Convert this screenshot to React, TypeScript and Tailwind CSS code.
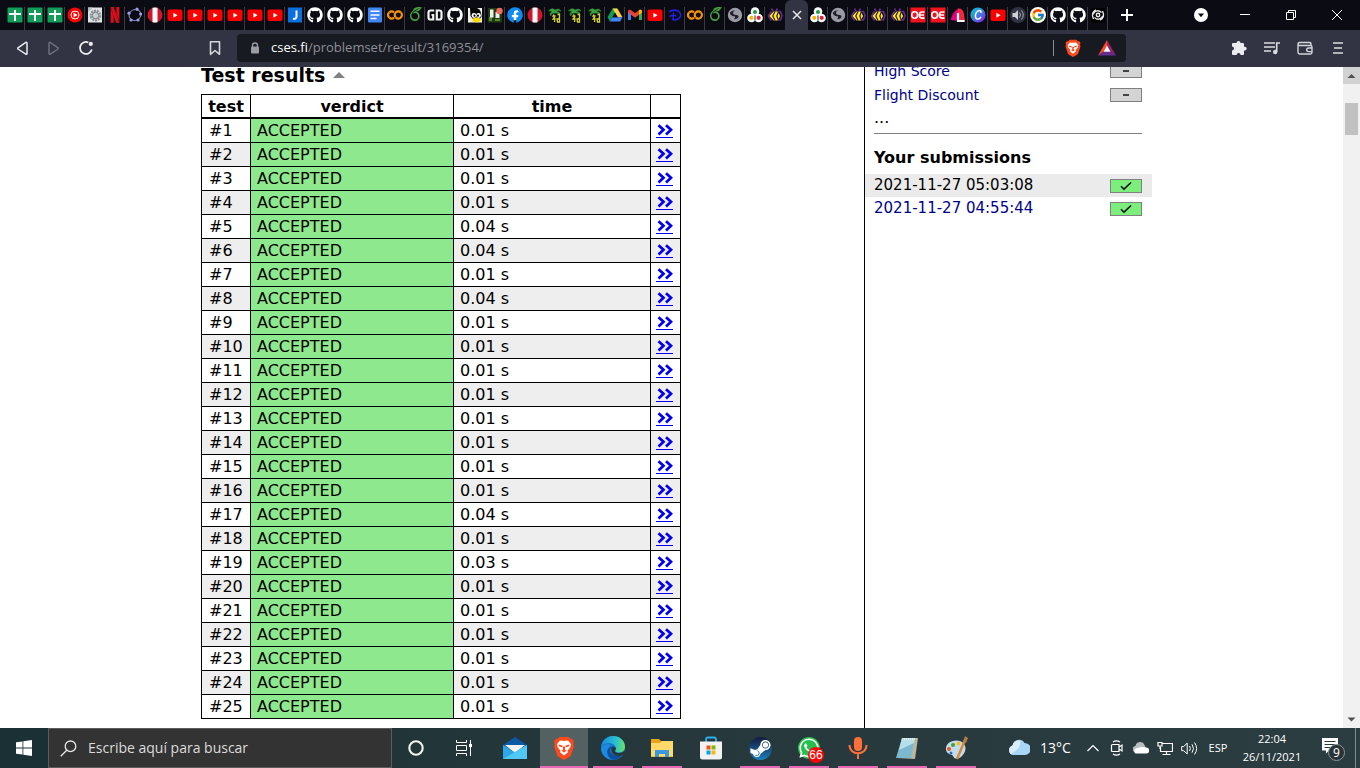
import type { ReactNode } from "react";
import { FaFacebook, FaGithub, FaSteamSymbol, FaWhatsapp } from "react-icons/fa";
import { FcGoogle } from "react-icons/fc";
import { SiGooglecolab, SiNetflix, SiOverleaf } from "react-icons/si";

/* ---------- tab icons (16x16) ---------- */

const Svg = ({ children, size = 16, box = "0 0 16 16" }: { children: ReactNode; size?: number; box?: string }) => (
  <svg width={size} height={size} viewBox={box} fill="none" aria-hidden="true" className="shrink-0">
    {children}
  </svg>
);

const Sheet = () => (
  <Svg>
    <rect x="0.5" y="0.5" width="15" height="15" rx="1" fill="#0f9d58" />
    <path d="M7 3h2v3h5v2H9v6H7V8H2V6h5z" fill="#fff" />
  </Svg>
);
const YtMusic = () => (
  <Svg>
    <circle cx="8" cy="8" r="7.5" fill="#f00" />
    <circle cx="8" cy="8" r="4" stroke="#fff" />
    <path d="M6.6 5.6 10.6 8l-4 2.4z" fill="#fff" />
  </Svg>
);
const Gear = () => (
  <Svg>
    <rect x="1" y="0.5" width="14" height="15" fill="#dfe3e3" />
    <circle cx="8.5" cy="8.5" r="4.6" stroke="#8a9194" strokeWidth="2.6" strokeDasharray="2 .8" />
    <circle cx="8.5" cy="8.5" r="3.2" fill="#c9cecf" stroke="#788084" />
    <path d="M1 .5h5L1 5z" fill="#b9bec0" />
  </Svg>
);
const Orbit = () => (
  <Svg>
    <ellipse cx="8" cy="8" rx="6" ry="5.4" stroke="#8d8d95" transform="rotate(-25 8 8)" />
    {[[10, 2.2], [13.6, 7], [11, 13], [4, 13], [2, 6.2]].map(([x, y]) => (
      <circle key={x} cx={x} cy={y} r="1.6" fill="#9999ff" />
    ))}
  </Svg>
);
const Peru = () => (
  <Svg>
    <circle cx="8" cy="8" r="7.5" fill="#d4142a" />
    <path d="M5.5.8a8 8 0 0 1 5 0v14.4a8 8 0 0 1-5 0z" fill="#fff" />
  </Svg>
);
const YouTube = () => (
  <Svg>
    <rect x="0.5" y="2.5" width="15" height="11.5" rx="2" fill="#f00" />
    <path d="M6.4 5.7 10.6 8.200l-4.2 2.500z" fill="#fff" />
  </Svg>
);
const Jay = () => (
  <Svg>
    <rect x="1" y="0.5" width="14" height="15" fill="#0b6fde" />
    <path d="M9.5 3.5v6c0 2-1.2 2.6-3.6 2.3" stroke="#fff" strokeWidth="2" />
  </Svg>
);
const Docs = () => (
  <Svg>
    <rect x="1" y="0.5" width="14" height="15" rx="1" fill="#4285f4" />
    <path d="M3.5 4.2h9M3.5 8h9M3.5 11.5h6" stroke="#fff" strokeWidth="1.6" />
  </Svg>
);
const GameDev = () => (
  <Svg>
    <path d="M7.200 3.500H3.600Q1.500 3.500 1.500 5.500v5q0 2 2.100 2H6.200V8H4.500M9.800 3.500H12.500q2 0 2 2v5q0 2-2 2H9.800z" stroke="#f2f2f2" strokeWidth="2.200" />
  </Svg>
);
const Penguin = () => (
  <Svg>
    <rect x="1" y="1" width="14" height="14.500" fill="#f1f1ea" />
    <path d="M3 1h7c3 1 4.500 4 4.500 9l-2 2H6L3.500 9z" fill="#050505" />
    <circle cx="7" cy="8.500" r="2.400" fill="#fff" />
    <circle cx="11.500" cy="8.500" r="2.400" fill="#fff" />
    <circle cx="7.500" cy="8.700" r="1.100" fill="#000" />
    <circle cx="11" cy="8.700" r="1.100" fill="#000" />
    <path d="M6 11.500q3.500-2 7 0l1.500 2-4 2-5-1z" fill="#fd0" />
  </Svg>
);
const Garden = () => (
  <Svg>
    <rect x="1" y="1" width="14" height="14.500" fill="#1e3c12" />
    <path d="M2 10h3v4H2zM8 12h5v2H8z" fill="#568a2c" />
    <path d="M3 2.500h3.500v8H3zM8.500 5h4v6h-4z" fill="#eee" />
    <circle cx="12.500" cy="4" r="3.200" fill="#f46a5a" />
  </Svg>
);
const Palm = () => (
  <Svg>
    <path d="M1.500 4Q5 0 8 3q4-2.500 6 1-3-1-5 .5 4 0 4 3-2-2-5-1.500Q4.500 5.500 3.500 9 2 6.500 5 4.500 3 3.500 1.500 4z" fill="#3ca33c" stroke="#2d8a38" strokeWidth=".6" />
    <path d="M7 7.500 6 9h2.500M8 9.500l-2 2.500h2l-.5 3M10.500 7.500h2v3l-1 1.500M10 12h2.500v3h-2z" stroke="#d6d336" strokeWidth="1.300" />
  </Svg>
);
const Drive = () => (
  <Svg>
    <path d="M5.600 1.500h4.800L8 5.700 2.900 14.500.500 10.300z" fill="#0f9d58" />
    <path d="M5.600 1.500h4.800l5.100 8.800h-4.800z" fill="#ffcd40" />
    <path d="M5.300 10.300h10.200l-2.400 4.200H2.900z" fill="#4285f4" />
    <path d="M8 5.700l2.700 4.600H5.300z" fill="#101018" />
  </Svg>
);
const Gmail = () => (
  <Svg>
    <path d="M1 4.500 4 6.700V13H1.600A.6.600 0 0 1 1 12.400z" fill="#4285f4" />
    <path d="M15 4.500 12 6.700V13h2.400a.6.600 0 0 0 .6-.6z" fill="#34a853" />
    <path d="M1 4.300C1 2.800 2.700 2.200 3.800 3L8 6.200 12.200 3c1.100-.8 2.800-.2 2.800 1.300v1.200L8 10.700 1 5.500z" fill="#ea4335" />
    <path d="M12 3.200c1.300-1 3-.3 3 1.100v1.200l-3 2.200z" fill="#fbbc04" />
  </Svg>
);
const Disney = () => (
  <Svg>
    <path d="M2 5Q6 1.500 12 4.500q4 4-1 7.500-3 1.500-6 .5M6.500 5.500l-.5 8M2.500 9.500q4-2 6.500-.5" stroke="#2020e8" strokeWidth="1.500" />
  </Svg>
);
const Globe = () => (
  <Svg>
    <circle cx="8" cy="8" r="7.200" fill="#9a9ba5" />
    <path d="M3 5.500q2-2.500 5-2-2.500 1-2 3Q7 8 10 8q2.500 1 1 3-1.500 1.500-4 1 1.500-1 1-2.500Q5 9.500 3 7z" fill="#20212c" />
  </Svg>
);
const Judge = () => (
  <Svg>
    <circle cx="8" cy="4.500" r="4.300" fill="#fff" />
    <circle cx="4.500" cy="11" r="4.300" fill="#fff" />
    <circle cx="11.500" cy="11" r="4.300" fill="#fff" />
    <circle cx="8" cy="5" r="2.100" fill="#23a046" />
    <circle cx="4.300" cy="10.800" r="2.100" fill="#f8b500" />
    <circle cx="11.700" cy="10.800" r="2.100" fill="#e4232e" />
    <path d="M8 8.500v5" stroke="#333" />
  </Svg>
);
const Bee = () => (
  <Svg>
    <path d="M6 4 4.500 1.500M9 4l1.500-2.500M11 4.500h2.500l1.500 4-1.500 4.500H11M4.500 4.500 1.500 9 4.500 13.500" stroke="#6b2b91" strokeWidth="1.600" />
    <path d="M6.500 4.500H11L13 9l-2 4.500H6.500L2.500 9z" fill="#ffe922" />
    <path d="M8 4.500 5.800 9 8 13.500M11.500 4.500 9.800 9l1.700 4.500" stroke="#29152e" strokeWidth="1.200" />
  </Svg>
);
const RedOe = () => (
  <Svg>
    <rect x="0.500" y="0.500" width="15" height="15" fill="#f5121f" />
    <ellipse cx="4.700" cy="8" rx="2.900" ry="3.200" stroke="#fff" strokeWidth="1.600" />
    <path d="M14.500 5H12Q9.300 5 9.300 8t2.700 3.100h2.500M9 8h5" stroke="#fff" strokeWidth="1.600" />
  </Svg>
);
const Ell = () => (
  <Svg>
    <path d="M8 1.500 12 4v10.500L.800 13Q2 6 8 1.500z" fill="#e6007e" />
    <path d="M8 1.500Q13 1 14 7l1 7.500H8z" fill="#f0283c" />
    <path d="M8 6v8h6.500" stroke="#fff" strokeWidth="2.200" />
  </Svg>
);
const Canva = () => (
  <Svg>
    <defs>
      <linearGradient id="canva" x1="2" y1="2" x2="13" y2="14" gradientUnits="userSpaceOnUse">
        <stop stopColor="#05c3cf" />
        <stop offset=".5" stopColor="#3e82e4" />
        <stop offset="1" stopColor="#7a2ee8" />
      </linearGradient>
    </defs>
    <circle cx="8" cy="8" r="7.600" fill="url(#canva)" />
    <path d="M10.800 6q.8-2.700-1.500-2.500C6.500 4 4.900 7.500 5.500 10c.6 3.200 3.800 2.500 5.500-.2" stroke="#fff" strokeWidth="1.500" />
  </Svg>
);
const Audio = () => (
  <Svg>
    <circle cx="8" cy="8" r="8" fill="#303342" />
    <path d="M2.500 6H5l3-3v10l-3-3H2.500z" fill="#d0d1d8" />
    <path d="M9.500 5.500q2 2.500 0 5M11.500 3.500q3.500 4.500 0 9" stroke="#a8a9b4" />
  </Svg>
);
const Spiral = () => (
  <Svg>
    <rect x="1" y="1" width="14" height="14.500" fill="#000" />
    <circle cx="8" cy="8" r="1.700" stroke="#eee" strokeWidth="1.400" />
    <path d="M3.500 12Q.5 5.500 6 3M12.500 4q3 6.500-2.500 9M4.500 10.500Q9 14.500 13 9M11.500 5.500Q7 1.500 3 7" stroke="#e5e5e5" strokeWidth="1.400" />
  </Svg>
);
const Octo = () => <FaGithub size={16} color="#fff" />;
const Colab = () => <SiGooglecolab size={16} color="#f9930b" />;
const Leaf = () => <SiOverleaf size={14} color="#47a141" />;
const Netflix = () => <SiNetflix size={16} color="#d80f1a" />;
const Face = () => (
  <span className="grid size-4 place-items-center rounded-full bg-[radial-gradient(circle,white_45%,transparent_50%)]">
    <FaFacebook size={16} color="#0e8cf1" />
  </span>
);
const Google = () => (
  <span className="grid size-4 place-items-center rounded-full bg-white">
    <FcGoogle size={14} />
  </span>
);

type Tab = [string, () => ReactNode];
const leftTabs: Tab[] = [
  ["Sheets", Sheet], ["Sheets", Sheet], ["Sheets", Sheet], ["YouTube Music", YtMusic], ["Settings", Gear],
  ["Netflix", Netflix], ["Orbit", Orbit], ["Peru", Peru], ["YouTube", YouTube], ["YouTube", YouTube],
  ["YouTube", YouTube], ["YouTube", YouTube], ["YouTube", YouTube], ["YouTube", YouTube], ["J", Jay],
  ["GitHub", Octo], ["GitHub", Octo], ["GitHub", Octo], ["Docs", Docs], ["Colab", Colab], ["Overleaf", Leaf],
  ["GD", GameDev], ["GitHub", Octo], ["Penguin", Penguin], ["Garden", Garden], ["Facebook", Face], ["Peru", Peru],
  ["Palm", Palm], ["Palm", Palm], ["Palm", Palm], ["Drive", Drive], ["Gmail", Gmail], ["YouTube", YouTube],
  ["Disney", Disney], ["Colab", Colab], ["Overleaf", Leaf], ["Web page", Globe], ["Judge", Judge], ["Bee", Bee],
];
const rightTabs: Tab[] = [
  ["Judge", Judge], ["Web page", Globe], ["Bee", Bee], ["Bee", Bee], ["Bee", Bee], ["OE", RedOe], ["OE", RedOe],
  ["L", Ell], ["Canva", Canva], ["YouTube", YouTube], ["Audio", Audio], ["Google", Google], ["GitHub", Octo],
  ["GitHub", Octo], ["Spiral", Spiral],
];

const TabButton = ({ tab: [label, Icon], line }: { tab: Tab; line: boolean }) => (
  <button
    aria-label={label}
    className={
      line
        ? "flex h-[23px] w-5 shrink-0 items-start justify-end pr-px self-end border-r border-[#3b3c42]"
        : "flex h-[23px] w-5 shrink-0 items-start justify-center self-end"
    }
  >
    <Icon />
  </button>
);

const BraveLion = ({ size }: { size: number }) => (
  <Svg size={size} box="0 0 24 24">
    <path d="M7.500 1h9l2 2 1.500-.3 2 2.600-.7 2 .7 2.700-3 9-1.500 2L12 24l-5.500-3L5 19 2 10l.7-2.700-.7-2 2-2.600L5.500 3z" fill="#fb4a1c" />
    <path d="M9 4.500l3 .6 3-.6 1.500.5L19 8.300l-.5 2.700-3 3.700.5 1.500-4 3.300-4-3.300.5-1.500-3-3.700L5 8.300 7.500 5z" fill="#fff" />
    <path d="M6.500 8.500l4 1-.3 1.700-3-.7zM17.500 8.500l-4 1 .3 1.700 3-.7zM10.700 10.500h2.600l-.5 3 1.700 1.300L12 16.500l-2.500-1.700 1.700-1.300z" fill="#fb4a1c" />
  </Svg>
);

function TabStrip() {
  return (
    <div className="flex h-[30px] shrink-0 bg-[#0b0b14]">
      <div className="flex min-w-0 pl-[5px]">
        {leftTabs.map((tab, i) => (
          <TabButton key={i} tab={tab} line={i < leftTabs.length - 1} />
        ))}
        <button aria-label="Close tab" className="grid w-[23px] shrink-0 place-items-center rounded-t-md bg-[#323443]">
          <Svg size={10} box="0 0 10 10">
            <path d="M1 1l8 8M9 1L1 9" stroke="#e8e8ec" strokeWidth="1.500" />
          </Svg>
        </button>
        {rightTabs.map((tab, i) => (
          <TabButton key={i} tab={tab} line />
        ))}
      </div>
      <button aria-label="New tab" className="grid w-[38px] place-items-center">
        <Svg size={12} box="0 0 12 12">
          <path d="M6 0v12M0 6h12" stroke="#fff" strokeWidth="2" />
        </Svg>
      </button>
      <div className="ml-auto flex">
        <button aria-label="Search tabs" className="grid w-[42px] place-items-center">
          <Svg size={14} box="0 0 14 14">
            <circle cx="7" cy="7" r="7" fill="#fff" />
            <path d="M4 5.500h6L7 9.300z" fill="#0b0b14" />
          </Svg>
        </button>
        <button aria-label="Minimize" className="grid w-[46px] place-items-center">
          <Svg size={10} box="0 0 10 10">
            <path d="M0 4.500h10" stroke="#fff" />
          </Svg>
        </button>
        <button aria-label="Restore" className="grid w-[46px] place-items-center">
          <Svg size={10} box="0 0 10 10">
            <path d="M.5 2.500h7v7h-7zM2.500 2.500v-2h7v7h-2" stroke="#fff" />
          </Svg>
        </button>
        <button aria-label="Close" className="grid w-[46px] place-items-center">
          <Svg size={10} box="0 0 10 10">
            <path d="M0 0l10 10M10 0L0 10" stroke="#fff" />
          </Svg>
        </button>
      </div>
    </div>
  );
}

function Toolbar() {
  return (
    <div className="flex h-[37px] shrink-0 bg-[#323443] pt-1 pb-[5px] pr-1.5 pl-1.5">
      <button aria-label="Back" className="grid w-8 place-items-center">
        <Svg>
          <path d="M13 3v10.600a.8.800 0 0 1-1.200.6L4 9a.8.800 0 0 1 0-1.200l7.800-5.400A.8.800 0 0 1 13 3z" stroke="#ececf0" strokeWidth="1.500" />
        </Svg>
      </button>
      <button aria-label="Forward" className="grid w-8 place-items-center">
        <Svg>
          <path d="M3 3v10.600a.8.800 0 0 0 1.200.6L12 9a.8.800 0 0 0 0-1.200L4.200 2.400A.8.800 0 0 0 3 3z" stroke="#6d6e7a" strokeWidth="1.500" />
        </Svg>
      </button>
      <button aria-label="Reload" className="grid w-8 place-items-center">
        <Svg>
          <path d="M13.800 9.500A6 6 0 1 1 10.300 2.400" stroke="#ececf0" strokeWidth="1.800" />
          <circle cx="12.800" cy="3.900" r="2.100" fill="#ececf0" />
        </Svg>
      </button>
      <button aria-label="Bookmark" className="ml-[97px] grid w-8 place-items-center">
        <Svg>
          <path d="M3.500 1.700h9v12.600L8 10.500l-4.500 3.800z" stroke="#d4d5da" strokeWidth="1.600" strokeLinejoin="round" />
        </Svg>
      </button>
      <div className="mr-24 ml-1.5 flex h-7 min-w-0 flex-1 items-center rounded bg-[#181a22] pr-2.5 pl-3">
        <Svg size={12} box="0 0 12 12">
          <path d="M3.500 5V3.500a2.500 2.500 0 0 1 5 0V5" stroke="#9b9ca4" strokeWidth="1.300" />
          <rect x="2" y="4.500" width="8" height="7" rx="1" fill="#9b9ca4" />
        </Svg>
        <a href="#result" className="ml-2.5 flex-1 truncate text-[13px] text-[#8d8f96]">
          <span className="text-white">cses.fi</span>/problemset/result/3169354/
        </a>
        <span className="mr-2.5 h-4 w-px bg-[#8b8c94]" />
        <button aria-label="Brave Shields" className="mr-4">
          <BraveLion size={18} />
        </button>
        <button aria-label="Rewards">
          <Svg size={18} box="0 0 18 16">
            <path d="M9 0v6L5.800 11.500 0 15.500z" fill="#ff4724" />
            <path d="M9 0l9 15.500-5.800-4L9 6z" fill="#9e1f63" />
            <path d="M0 15.500l5.800-4h6.400l5.800 4z" fill="#662d91" />
            <path d="M9 5.500l3.500 6.300h-7z" fill="#fff" />
          </Svg>
        </button>
      </div>
      <button aria-label="Extensions" className="grid w-[33px] place-items-center">
        <Svg>
          <path d="M5.500 3a2 2 0 0 1 4 0H12q1 0 1 1v2.700h.8a1.900 1.900 0 0 1 0 3.800H13v3.500q0 1-1 1H9.600a2 2 0 0 0-4 0H2q-1 0-1-1v-3.500a2 2 0 0 0 0-4V4q0-1 1-1z" fill="#ececf0" />
        </Svg>
      </button>
      <button aria-label="Playlist" className="grid w-[33px] place-items-center">
        <Svg>
          <path d="M0 3h11M0 7h11M0 11h7M12.700 12V3H16" stroke="#dcdce2" strokeWidth="1.600" />
          <circle cx="11.200" cy="12" r="2.200" fill="#dcdce2" />
        </Svg>
      </button>
      <button aria-label="Wallet" className="grid w-[33px] place-items-center">
        <Svg>
          <path d="M14 5.500V4.200A1.200 1.200 0 0 0 12.800 3M1 4v8.300q0 1.700 1.700 1.700h10.600q1.700 0 1.700-1.700V7q0-1.500-1.700-1.500H2.600Q1 5.500 1 4q0-1.500 1.600-1.500h10.200q1.200 0 1.200 1.400M15 8h-3.500a1.800 1.800 0 0 0 0 3.600H15" stroke="#d4d5da" strokeWidth="1.400" />
        </Svg>
      </button>
      <button aria-label="Menu" className="grid w-[33px] place-items-center">
        <Svg>
          <path d="M3 3h10M4 8h8M3 13h10" stroke="#dcdce2" strokeWidth="1.600" />
        </Svg>
      </button>
    </div>
  );
}

/* ---------- page ---------- */

const times: Record<number, string> = { 5: "0.04 s", 6: "0.04 s", 8: "0.04 s", 17: "0.04 s", 19: "0.03 s" };
const tests = Array.from({ length: 25 }, (_, i) => ({ id: i + 1, time: times[i + 1] ?? "0.01 s" }));

function Results() {
  return (
    <main className="min-w-0 flex-1 pl-2.5">
      <h1 className="flex h-[27px] items-start gap-2 text-[19px] leading-4 font-bold">
        Test results
        <button aria-label="Collapse results" className="flex h-4 items-center">
          <svg width="12" height="6" viewBox="0 0 12 6" aria-hidden="true">
            <path d="M6 0l6 6H0z" fill="#808080" />
          </svg>
        </button>
      </h1>
      <table className="w-[480px] max-w-full table-fixed border-collapse border border-black leading-5">
        <colgroup>
          <col className="w-[49px]" />
          <col className="w-[203px]" />
          <col />
          <col className="w-[30px]" />
        </colgroup>
        <thead>
          <tr className="h-[23px] border-b-2 border-black">
            <th className="border-r border-black p-0 pt-0.5">test</th>
            <th className="border-r border-black p-0 pt-0.5">verdict</th>
            <th className="border-r border-black p-0 pt-0.5">time</th>
            <th className="p-0" />
          </tr>
        </thead>
        <tbody>
          {tests.map(({ id, time }) => (
            <tr key={id} className="h-6 border-b border-black even:bg-[#eeeeee]">
              <td className="border-r border-black p-0 pt-0.5 pl-[7px]">#{id}</td>
              <td className="border-r border-black bg-[#8ee88e] p-0 pt-0.5 pl-1.5">ACCEPTED</td>
              <td className="border-r border-black p-0 pt-0.5 pl-1.5">{time}</td>
              <td className="p-0 pt-0.5 pl-[5px]">
                <a href={`#test${id}`} aria-label={`Details of test ${id}`} className="flex h-3.5 w-[17px] justify-center border-b border-[#0000ee]">
                  <svg width="16" height="12" viewBox="0 0 16 12" fill="none" aria-hidden="true">
                    <path d="M1.500 1.200l5 4.600-5 4.600M9 1.200l5 4.600-5 4.600" stroke="#0000ee" strokeWidth="2.700" />
                  </svg>
                </a>
              </td>
            </tr>
          ))}
        </tbody>
      </table>
    </main>
  );
}

const Badge = ({ ok }: { ok?: boolean }) => (
  <span className={ok ? "grid h-3.5 w-8 place-items-center border border-[#808080] bg-[#7bee7b]" : "grid h-3.5 w-8 place-items-center border border-[#808080] bg-[#d4d4d4]"}>
    <svg width="12" height="10" viewBox="0 0 12 10" fill="none" aria-hidden="true">
      {ok ? <path d="M1 5.200l3 3L11 1.500" stroke="#111" strokeWidth="1.600" /> : <path d="M3 5h6" stroke="#444" strokeWidth="2" />}
    </svg>
  </span>
);

function Sidebar() {
  return (
    <aside className="-mt-2 w-72 shrink-0 border-l border-black text-sm">
      <ul className="pr-2.5 pl-[9px] text-[#00008b]">
        <li className="flex h-6 items-center justify-between">
          <a href="#high-score">High Score</a>
          <Badge />
        </li>
        <li className="flex h-[23px] items-center justify-between">
          <a href="#flight-discount">Flight Discount</a>
          <Badge />
        </li>
        <li className="h-[27px] text-base leading-6 text-black">...</li>
      </ul>
      <hr className="mr-2.5 ml-[9px] border-[#808080]" />
      <h2 className="px-[9px] pt-3 pb-1 text-base font-bold">Your submissions</h2>
      <ul className="text-[15px]">
        <li className="flex h-[23px] items-center justify-between bg-[#ebebeb] pr-2.5 pl-[9px]">
          2021-11-27 05:03:08
          <Badge ok />
        </li>
        <li className="flex h-[23px] items-center justify-between pr-2.5 pl-[9px]">
          <a href="#earlier" className="text-[#00008b]">2021-11-27 04:55:44</a>
          <Badge ok />
        </li>
      </ul>
    </aside>
  );
}

const ScrollBar = () => (
  <div className="flex w-[17px] shrink-0 flex-col items-center bg-[#f1f1f1]">
    <svg width="17" height="17" viewBox="0 0 17 17" aria-hidden="true">
      <path d="M0 0h17v17H0z" fill="#d2d2d2" />
      <path d="M8.500 7l4 4h-8z" fill="#505050" />
    </svg>
    <div className="mt-[19px] h-8 w-[13px] bg-[#c1c1c1]" />
    <svg width="17" height="17" viewBox="0 0 17 17" aria-hidden="true" className="mt-auto">
      <path d="M8.500 10.500l4-4h-8z" fill="#505050" />
    </svg>
  </div>
);

/* ---------- taskbar ---------- */

const App48 = ({ label, children, running, active }: { label: string; children: ReactNode; running?: boolean; active?: boolean }) => (
  <button
    aria-label={label}
    className={active ? "flex w-12 shrink-0 flex-col items-center bg-[#536162]" : "flex w-12 shrink-0 flex-col items-center"}
  >
    <span className="grid flex-1 place-items-center pt-0.5">{children}</span>
    <span className={active ? "h-0.5 w-12 bg-[#e868b8]" : running ? "h-0.5 w-10 bg-[#e868b8]" : "h-0.5 w-10"} />
  </button>
);

function Taskbar() {
  return (
    <footer className="flex h-10 shrink-0 bg-linear-to-r from-[#1b3034] via-[#26383b] to-[#2b3d40] text-white">
      <button aria-label="Start" className="grid w-12 shrink-0 place-items-center">
        <Svg>
          <path d="M0 2.300l6.500-.9v6.200H0zM7.300 1.300L16 0v7.600H7.300zM0 8.400h6.500v6.200L0 13.700zM7.300 8.400H16V16l-8.700-1.300z" fill="#fff" />
        </Svg>
      </button>
      <label className="flex w-[344px] items-center gap-[11px] border border-[#5c5c5c] bg-[#333333] pl-[11px]">
        <Svg size={17} box="0 0 17 17">
          <circle cx="10.500" cy="6.300" r="5.300" stroke="#e6e6e6" strokeWidth="1.300" />
          <path d="M6.700 10.300L.7 16.300" stroke="#e6e6e6" strokeWidth="1.300" />
        </Svg>
        <input aria-label="Buscar" placeholder="Escribe aquí para buscar" className="min-w-0 flex-1 bg-transparent text-sm text-white outline-none placeholder:text-[#dcdcdc]" />
      </label>
      <App48 label="Cortana">
        <Svg>
          <circle cx="8" cy="8" r="6.700" stroke="#f2f2f2" strokeWidth="2.100" />
        </Svg>
      </App48>
      <App48 label="Task view">
        <Svg size={18} box="0 0 18 18">
          <path d="M1.500 1v2.500h10V1M1.500 17v-2.500h10V17M1.500 6.500h10v5h-10zM15.500 1v16" stroke="#fff" />
          <path d="M14 5h3v3h-3z" fill="#fff" />
        </Svg>
      </App48>
      <div className="ml-[3px] flex gap-px">
        <App48 label="Mail">
          <Svg size={24} box="0 0 24 24">
            <path d="M0 9L12 1l12 8v4H0z" fill="#0c59a4" />
            <path d="M2 9h20L12 17z" fill="#f3f3f3" />
            <path d="M0 9l12 7.500L24 9v14H0z" fill="#2ba8e8" />
            <path d="M0 23L24 9v14z" fill="#50c8f5" />
          </Svg>
        </App48>
        <App48 label="Brave" active>
          <BraveLion size={24} />
        </App48>
        <App48 label="Edge" running>
          <Svg size={24} box="0 0 24 24">
            <defs>
              <linearGradient id="edge" x1="2" y1="6" x2="24" y2="9" gradientUnits="userSpaceOnUse">
                <stop stopColor="#1c8fdc" />
                <stop offset=".6" stopColor="#2bc3d2" />
                <stop offset="1" stopColor="#6fe05a" />
              </linearGradient>
            </defs>
            <circle cx="12" cy="12" r="12" fill="#1677c8" />
            <path d="M0 11.500C1 4 6 0 12 0c7 0 12 5 12 10.500 0 4-3 6-6.500 6-3 0-4.300-1.200-3-2.500C16 11 13 7 8.500 7 4 7 1 9 0 11.500z" fill="url(#edge)" />
            <path d="M9.500 9.500C6 14 8 20 14 23.500 8 25 0 20 0 12c3-4 8-4.500 9.500-2.500z" fill="#1b8ae0" />
            <path d="M10.500 10C6 17 13 21.500 21 18.500c-2 4-6.500 6.300-10.500 5C4.500 19 5 12 10.500 10z" fill="#0e4f9c" />
            <path d="M14.500 14c-1.500 1.500 1 3.500 4.500 2.800 2-.3 4-1.300 4.500-2.300l.5 3-2 1.500C15 22 9 18 10.500 11c2-1.500 4.500 0 4.500 2z" fill="#26383b" />
          </Svg>
        </App48>
        <App48 label="Explorer" running>
          <Svg size={22} box="0 0 22 22">
            <path d="M0 2h8l2 2h12v16H0z" fill="#e8a317" />
            <path d="M0 6h9l2-2h11v15.500H0z" fill="#ffd96a" />
            <path d="M4 20v-7h14v7h-4v-3H8v3z" fill="#3a96dd" />
          </Svg>
        </App48>
        <App48 label="Store">
          <Svg size={24} box="0 0 24 24">
            <path d="M7 6V3.500Q7 1.500 9 1.500h6q2 0 2 2V6" stroke="#28b0ea" strokeWidth="1.800" />
            <path d="M1 5.500h22V21q0 2.500-2.500 2.500h-17Q1 23.500 1 21z" fill="#f2f2f2" />
            <path d="M7.500 9.500h4v4h-4z" fill="#f25022" />
            <path d="M12.500 9.500h4v4h-4z" fill="#7fba00" />
            <path d="M7.500 14.500h4v4h-4z" fill="#00a4ef" />
            <path d="M12.500 14.500h4v4h-4z" fill="#ffb900" />
          </Svg>
        </App48>
        <App48 label="Steam" running>
          <span className="grid size-[23px] place-items-center overflow-hidden rounded-full bg-linear-to-b from-[#101c40] to-[#1780b8]">
            <FaSteamSymbol size={23} color="#fff" />
          </span>
        </App48>
        <App48 label="WhatsApp" running>
          <span className="relative grid place-items-center">
            <span className="grid size-[22px] place-items-center rounded-full bg-[#25c04b]">
              <FaWhatsapp size={22} color="#fff" />
            </span>
            <span className="absolute -right-1 -bottom-1 grid size-4 place-items-center rounded-full bg-[#fa0505] font-['Liberation_Sans',sans-serif] text-xs leading-none">66</span>
          </span>
        </App48>
        <App48 label="Recorder" running>
          <Svg size={22} box="0 0 22 22">
            <rect x="7" y="0" width="8" height="14" rx="4" fill="#ff7038" />
            <path d="M2.500 8c0 11 17 11 17 0M11 16v6" stroke="#ff7038" strokeWidth="2" />
          </Svg>
        </App48>
        <App48 label="Notepad" running>
          <Svg size={24} box="0 0 24 24">
            <path d="M8 2h15l-3 21-18-1z" fill="#b9b79c" />
            <path d="M7 2h13l-4 20H1z" fill="#7cb9cf" />
            <path d="M7 2h13l-1 5L4 14z" fill="#b7dfea" />
            <path d="M7 3h13" stroke="#ececec" strokeWidth="2" strokeDasharray="1 1" />
          </Svg>
        </App48>
        <App48 label="Paint" running>
          <Svg size={24} box="0 0 24 24">
            <path d="M2 14C1 7 9 3 16 5c7 3 7 10 2 15-4 4-8 3-9 0-.5-2-6-1-7-6z" fill="#c3dcec" />
            <circle cx="5" cy="13" r="2" fill="#e4572e" />
            <circle cx="9" cy="9" r="2" fill="#46a02c" />
            <circle cx="14.500" cy="7.500" r="2" fill="#f0c02a" />
            <circle cx="7" cy="17" r="1.500" fill="#2a6ac0" />
            <path d="M21 4l-8 19" stroke="#d8893a" strokeWidth="2.500" />
            <path d="M19 6l2-6 3 2-2 5z" fill="#b07a4c" />
          </Svg>
        </App48>
      </div>
      <div className="ml-auto flex items-stretch">
        <button className="flex w-[73px] items-center gap-2.5 text-sm whitespace-nowrap">
          <Svg size={22} box="0 0 22 22">
            <path d="M5 18a5 5 0 0 1-.5-9.600A6.500 6.500 0 0 1 16.500 6 6 6 0 0 1 17 18z" fill="#a9d5f6" />
            <path d="M5 18a5 5 0 0 1-.5-9.600A6.500 6.500 0 0 1 12 3.500q2 7-9 13.500z" fill="#dbeefc" />
          </Svg>
          13°C
        </button>
        <button aria-label="Hidden icons" className="grid w-6 place-items-center">
          <Svg size={12} box="0 0 12 12">
            <path d="M.5 9L6 3.500 11.500 9" stroke="#fff" strokeWidth="1.200" />
          </Svg>
        </button>
        <button aria-label="Camera" className="grid w-6 place-items-center">
          <Svg>
            <path d="M3.500 4.500h6.500v7H3.500Q2.500 11.500 2.500 10.500V5.500q0-1 1-1zM10 7l3-2v6l-3-2M4 2Q7.500-.2 11 2M4 14Q7.500 16.200 11 14" stroke="#fff" strokeWidth="1.200" />
          </Svg>
        </button>
        <button aria-label="OneDrive" className="grid w-6 place-items-center">
          <Svg>
            <path d="M3 12a3 3 0 0 1-.5-6 4.700 4.700 0 0 1 9-1l3.500 7z" fill="#b8bebf" />
            <path d="M2.500 13.500a3 3 0 0 1 0-5L8 7l5 .500a3 3 0 0 1 .5 6z" fill="#fff" />
          </Svg>
        </button>
        <button aria-label="Network" className="grid w-6 place-items-center">
          <Svg>
            <path d="M5 3.500h10.500v8H3.500V7M1 2.500h4V6H1zM3 6v3M9.500 11.500v2.500M5.500 14.500h8" stroke="#fff" strokeWidth="1.200" />
          </Svg>
        </button>
        <button aria-label="Volume" className="grid w-6 place-items-center">
          <Svg size={17} box="0 0 17 16">
            <path d="M.7 6v4.200h2l3.500 3.300V2.600L2.700 6zM8.500 5.500q1.800 2.500 0 5M11 3.800q3 4.200 0 8.400M13.500 2q4.300 6 0 12" stroke="#fff" />
          </Svg>
        </button>
        <button className="w-[34px] text-[11px]">ESP</button>
        <div className="flex w-[74px] flex-col items-center justify-center text-[11px] leading-[18px]">
          <span>22:04</span>
          <span>26/11/2021</span>
        </div>
        <button aria-label="Notifications" className="grid w-[42px] place-items-center pb-1">
          <span className="relative">
            <Svg>
              <path d="M0 0h16v12.500H7L4 15.500v-3H0z" fill="#fff" />
              <path d="M2.500 3.500h11M2.500 6.500h11M2.500 9.500h7" stroke="#26383b" strokeWidth="1.200" />
            </Svg>
            <span className="absolute top-1.5 left-1.5 grid size-[17px] place-items-center rounded-full border border-[#8e9698] bg-[#293335] text-xs leading-none">9</span>
          </span>
        </button>
        <div className="ml-1 w-[5px] border-l border-[#7f8b8d]" />
      </div>
    </footer>
  );
}

export default function App() {
  return (
    <div className="flex h-screen flex-col overflow-hidden bg-white font-['Open_Sans','Noto_Sans',sans-serif]">
      <TabStrip />
      <Toolbar />
      <div className="flex min-h-0 flex-1 overflow-hidden font-['Verdana','DejaVu_Sans',sans-serif] text-base text-black">
        <div className="min-w-0 flex-1 overflow-hidden">
          <div className="mx-auto flex h-full w-full max-w-[961px]">
            <Results />
            <Sidebar />
          </div>
        </div>
        <ScrollBar />
      </div>
      <Taskbar />
    </div>
  );
}
